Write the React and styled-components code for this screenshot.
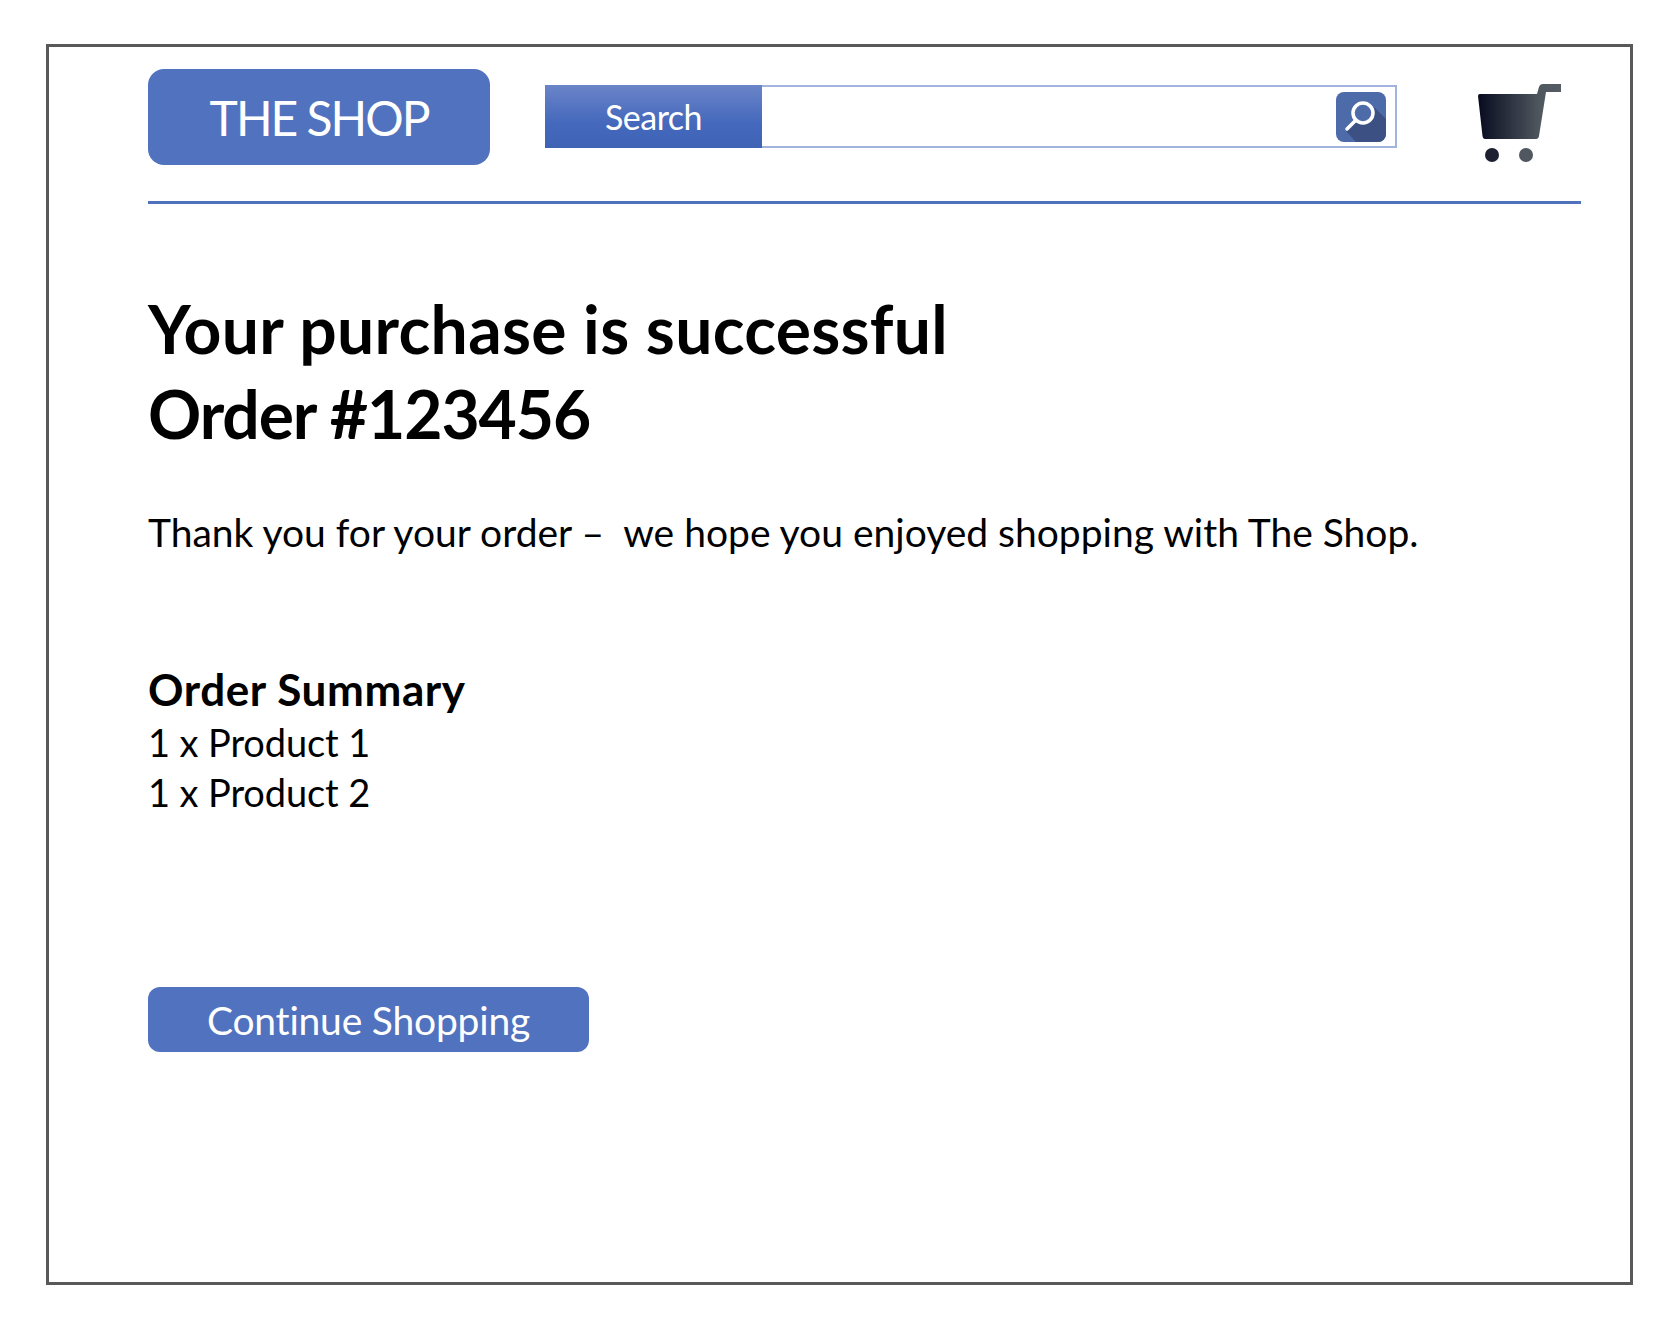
import React from "react";
import styled, { createGlobalStyle } from "styled-components";

const GlobalStyle = createGlobalStyle`
  html, body {
    margin: 0;
    padding: 0;
    background: #fff;
    font-family: Lato, "Open Sans", sans-serif;
    color: #000;
  }
`;

const Page = styled.div`
  width: 1670px;
  height: 1320px;
  padding: 44px 0 0 46px;
  box-sizing: border-box;
`;

const Frame = styled.main`
  width: 1587px;
  height: 1241px;
  box-sizing: border-box;
  border: 3px solid #595959;
  padding: 22px 49px 0 99px;
`;

const Header = styled.header`
  display: flex;
  align-items: flex-start;
  height: 132px;
  border-bottom: 3px solid #4f71be;
`;

const Logo = styled.div`
  width: 342px;
  height: 96px;
  flex: none;
  border-radius: 16px;
  background: #5172be;
  color: #fff;
  font-size: 48px;
  letter-spacing: -2px;
  display: flex;
  align-items: center;
  justify-content: center;
`;

const SearchBar = styled.form`
  width: 852px;
  height: 63px;
  margin: 16px 0 0 55px;
  flex: none;
  box-sizing: border-box;
  border: 2px solid #a0b4dd;
  display: flex;
  align-items: center;
  justify-content: space-between;
  padding-right: 9px;
`;

const SearchLabel = styled.div`
  width: 217px;
  height: 63px;
  margin-left: -2px;
  background: linear-gradient(#6a84c8, #4468bc 62%, #3f63b4);
  color: #fff;
  font-size: 34px;
  letter-spacing: -0.5px;
  display: flex;
  align-items: center;
  justify-content: center;
`;

const SearchIcon = styled.svg`
  width: 50px;
  height: 50px;
  display: block;
`;

const CartIcon = styled.svg`
  width: 83px;
  height: 78px;
  margin: 15px 0 0 81px;
  display: block;
  flex: none;
`;

const Title = styled.h1`
  margin: 82px 0 0;
  font-size: 66px;
  line-height: 85px;
  font-weight: 700;
`;

const TitleLine = styled.span`
  display: block;
  letter-spacing: ${(props) => props.$spacing}px;
`;

const Message = styled.p`
  margin: 51px 0 0;
  font-size: 39px;
  line-height: 50px;
`;

const Summary = styled.section`
  margin-top: 105px;
`;

const SummaryTitle = styled.h2`
  margin: 0;
  font-size: 44px;
  line-height: 55px;
  font-weight: 700;
  letter-spacing: 0.6px;
`;

const SummaryRow = styled.div`
  font-size: 38px;
  line-height: 50px;
  letter-spacing: -0.1px;
`;

const ContinueButton = styled.button`
  display: block;
  width: 441px;
  height: 65px;
  margin-top: 170px;
  padding: 0;
  border: 0;
  border-radius: 12px;
  background: #5172be;
  color: #fff;
  font-family: inherit;
  font-size: 39px;
  letter-spacing: -0.2px;
`;

const App = () => {
  return (
    <Page>
      <GlobalStyle />
      <Frame>
        <Header>
          <Logo>THE SHOP</Logo>
          <SearchBar>
            <SearchLabel>Search</SearchLabel>
            <SearchIcon viewBox="0 0 50 50" aria-hidden="true">
              <defs>
                <clipPath id="search-clip">
                  <rect width="50" height="50" rx="8" />
                </clipPath>
              </defs>
              <g clipPath="url(#search-clip)">
                <rect width="50" height="50" fill="#4d6ba9" />
                <path d="M38 15L50 27V50H20L10 39L19 28Z" fill="#3c5083" />
              </g>
              <circle cx="27" cy="21" r="10" fill="#4d6ba9" stroke="#fff" strokeWidth="3.5" />
              <path d="M20 28L11 37" stroke="#fff" strokeWidth="3.5" strokeLinecap="round" />
            </SearchIcon>
          </SearchBar>
          <CartIcon viewBox="0 0 83 78" aria-hidden="true">
            <defs>
              <linearGradient id="cart-fill" x1="0" x2="1" y1="0" y2="0">
                <stop offset="0" stopColor="#080b1f" />
                <stop offset="0.75" stopColor="#50585f" />
                <stop offset="1" stopColor="#555c63" />
              </linearGradient>
            </defs>
            <path
              d="M2 10H59L61 3Q62 0 65 0H83V8H68L61 52Q60.500 55 58 55H7Q5 55 4.500 52L0 12Q0 10 2 10Z"
              fill="url(#cart-fill)"
            />
            <circle cx="14" cy="71" r="7" fill="#1d2030" />
            <circle cx="48" cy="71" r="7" fill="#50575f" />
          </CartIcon>
        </Header>
        <Title>
          <TitleLine $spacing={0.3}>Your purchase is successful</TitleLine>
          <TitleLine $spacing={-1.1}>Order #123456</TitleLine>
        </Title>
        <Message>Thank you for your order – &nbsp;we hope you enjoyed shopping with The Shop.</Message>
        <Summary>
          <SummaryTitle>Order Summary</SummaryTitle>
          <SummaryRow>1 x Product 1</SummaryRow>
          <SummaryRow>1 x Product 2</SummaryRow>
        </Summary>
        <ContinueButton type="button">Continue Shopping</ContinueButton>
      </Frame>
    </Page>
  );
};

export default App;
